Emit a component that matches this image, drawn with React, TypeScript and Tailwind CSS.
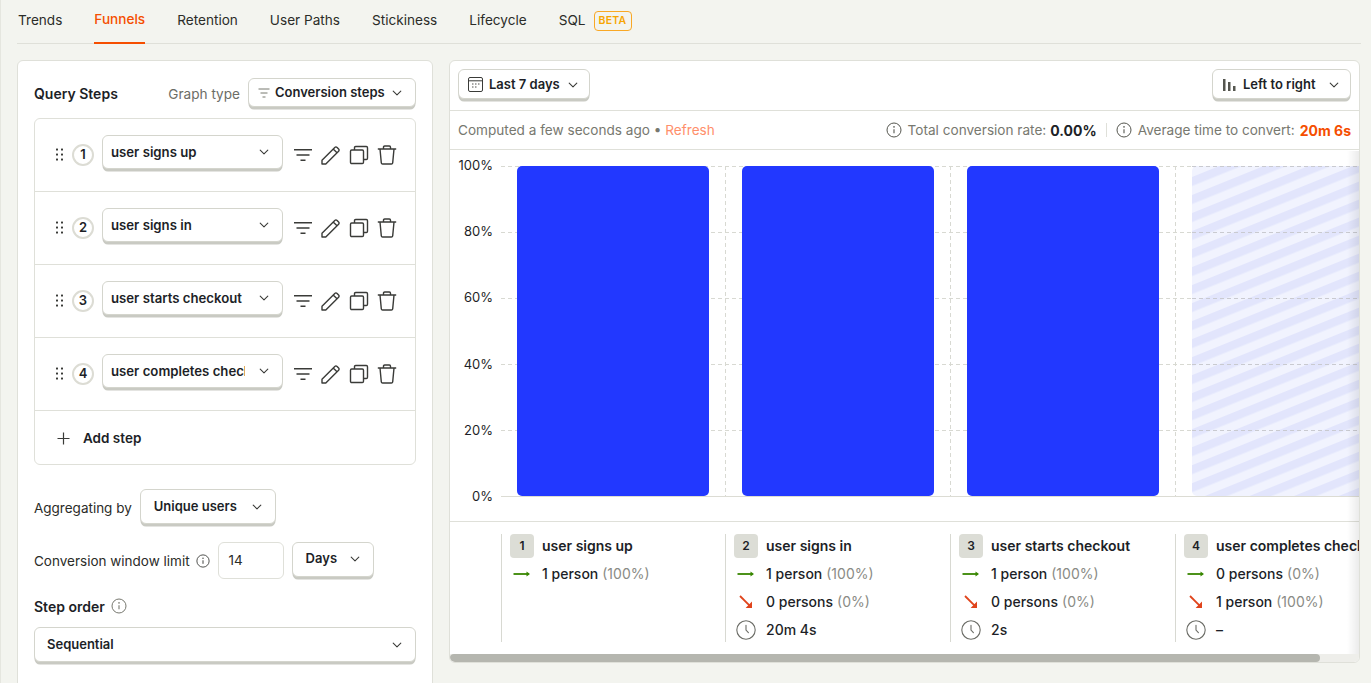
import React from "react";

const Chevron = ({ cls = "" }: { cls?: string }) => (
  <svg width="12" height="12" viewBox="0 0 12 12" fill="none" className={cls}>
    <path d="M2.2 4.2 6 7.8l3.8-3.6" stroke="#3a3b38" strokeWidth="1.1" strokeLinecap="round" strokeLinejoin="round" />
  </svg>
);

const Info = ({ size = 16, color = "#55564f" }: { size?: number; color?: string }) => (
  <svg width={size} height={size} viewBox="0 0 16 16" fill="none" className="shrink-0">
    <circle cx="8" cy="8" r="7" stroke={color} strokeWidth="1" />
    <path d="M8 7.2v4" stroke={color} strokeWidth="1.1" />
    <circle cx="8" cy="4.9" r=".8" fill={color} />
  </svg>
);

const Clock = () => (
  <svg width="20" height="20" viewBox="0 0 20 20" fill="none">
    <circle cx="10" cy="10" r="9.2" stroke="#6b6c66" strokeWidth="1.1" />
    <path d="M10 5.2V10l2.4 2.6" stroke="#6b6c66" strokeWidth="1.1" strokeLinecap="round" />
  </svg>
);

const ArrowRight = () => (
  <svg width="18" height="10" viewBox="0 0 18 10" fill="none">
    <path d="M.5 5h15" stroke="#388600" strokeWidth="1.8" />
    <path d="M13.5 2.4 17 5l-3.500 2.600z" fill="#388600" />
  </svg>
);

const ArrowDown = () => (
  <svg width="14" height="14" viewBox="0 0 14 14" fill="none">
    <path d="M1 1l10.4 10.4" stroke="#e0441c" strokeWidth="1.8" />
    <path d="M13 6.6V13H6.6z" fill="#e0441c" />
  </svg>
);

const Btn = ({ children, cls }: { children: React.ReactNode; cls: string }) => (
  <div
    className={`flex items-center bg-white border border-[#d4d5cd] rounded-md shadow-[0_3px_0_-0.5px_#c9cac3] font-semibold text-[13px] text-[#1d1f27] ${cls}`}
  >
    {children}
  </div>
);

const FilterIcon = () => (
  <svg width="20" height="14" viewBox="0 0 20 14" fill="none">
    <path d="M1 1.8h18M3.5 7h13M7.5 12.2h5" stroke="#3a3b38" strokeWidth="1.6" />
  </svg>
);
const PencilIcon = () => (
  <svg width="22" height="22" viewBox="0 0 22 22" fill="none">
    <path
      d="M2 16.2 14.8 3.4a1.6 1.6 0 0 1 2.3 0l1.5 1.5a1.6 1.6 0 0 1 0 2.3L5.8 20H2zM13.2 5l3.8 3.8"
      stroke="#3a3b38"
      strokeWidth="1.4"
      strokeLinejoin="round"
    />
  </svg>
);
const CopyIcon = () => (
  <svg width="20" height="20" viewBox="0 0 20 20" fill="none">
    <rect x="1.5" y="5" width="13" height="13.5" rx="1.2" stroke="#3a3b38" strokeWidth="1.4" />
    <path d="M5.5 5V2.7c0-.7.5-1.200 1.200-1.200h10.600c.7 0 1.200.5 1.200 1.200v10.600c0 .7-.5 1.200-1.200 1.200H14.500" stroke="#3a3b38" strokeWidth="1.4" />
  </svg>
);
const TrashIcon = () => (
  <svg width="20" height="20" viewBox="0 0 20 20" fill="none">
    <path d="M.8 4h18.400M6.500 4V2.200C6.500 1.500 7 1 7.700 1h4.600c.7 0 1.200.5 1.200 1.200V4M3 4l1.300 13.800c.1.700.6 1.200 1.300 1.200h8.800c.7 0 1.200-.5 1.300-1.200L17 4" stroke="#3a3b38" strokeWidth="1.4" />
  </svg>
);
const Grip = () => (
  <svg width="7" height="13" viewBox="0 0 7 13" fill="#3a3b38">
    <rect x="0" y="0.500" width="2" height="2" rx=".5" />
    <rect x="5" y="0.500" width="2" height="2" rx=".5" />
    <rect x="0" y="5.500" width="2" height="2" rx=".5" />
    <rect x="5" y="5.500" width="2" height="2" rx=".5" />
    <rect x="0" y="10.500" width="2" height="2" rx=".5" />
    <rect x="5" y="10.500" width="2" height="2" rx=".5" />
  </svg>
);

const Step = ({ n, label }: { n: number; label: string }) => (
  <div className="h-[73px] flex items-center border-b border-[#dfe0d9] pl-[21px] pb-px">
    <Grip />
    <div className="ml-[9px] w-[22px] h-[22px] rounded-full border-2 border-[#dcdcd4] flex items-center justify-center text-[13px] font-semibold text-[#1d1f27]">
      {n}
    </div>
    <Btn cls="ml-[8px] w-[181px] h-[34px] -mt-[5px] pl-2 pr-[12px] justify-between">
      <span className="overflow-hidden whitespace-nowrap w-[134px] pt-px text-[13.2px]">{label}</span>
      <Chevron />
    </Btn>
    <div className="ml-[10px] flex items-center">
      <FilterIcon />
      <span className="ml-[7px]"><PencilIcon /></span>
      <span className="ml-[7px]"><CopyIcon /></span>
      <span className="ml-[8px]"><TrashIcon /></span>
    </div>
  </div>
);

const plotLines = [16.5, 82.5, 148.5, 214.5, 280.5];

const Chart = () => (
  <div className="flex h-[372px] border-b border-[#dfe0d9] shrink-0">
    <div className="w-[43px] h-[347px] mt-[7px] flex flex-col justify-between items-end shrink-0 text-[13px] leading-4 text-[#1d1f27]">
      <span>100%</span>
      <span>80%</span>
      <span>60%</span>
      <span>40%</span>
      <span>20%</span>
      <span>0%</span>
    </div>
    <svg width="858" height="371" className="shrink-0 ml-[8px]">
      <defs>
        <pattern id="hatch" width="40" height="16.700" patternUnits="userSpaceOnUse" patternTransform="rotate(-22)">
          <rect width="40" height="16.700" fill="#f1f3fe" />
          <rect width="40" height="8.350" fill="#e2e5fc" />
        </pattern>
      </defs>
      {plotLines.map((y) => (
        <line key={y} x1="0" x2="858" y1={y} y2={y} stroke="#d8d9d2" strokeDasharray="4 3" />
      ))}
      <line x1="0" x2="858" y1="346.500" y2="346.500" stroke="#dcdcd4" />
      {[224.5, 449.5, 674.5].map((x) => (
        <line key={x} x1={x} x2={x} y1="16" y2="346" stroke="#d8d9d2" strokeDasharray="4 3" />
      ))}
      {[16, 241, 466].map((x) => (
        <rect key={x} x={x} y="16" width="192" height="330" rx="5" fill="#2238ff" />
      ))}
      <rect x="691" y="16" width="192" height="330" rx="5" fill="url(#hatch)" />
      {plotLines.map((y) => (
        <line key={y} x1="691" x2="858" y1={y} y2={y} stroke="#c9cad0" strokeDasharray="4 3" />
      ))}
    </svg>
  </div>
);

type Row = { icon: "right" | "down" | "clock"; main: string; sub?: string };

const LegendCol = ({ n, title, rows, cls }: { n: number; title: string; rows: Row[]; cls: string }) => (
  <div className={`h-[108px] shrink-0 border-l border-[#d8d9d2] pl-2 whitespace-nowrap ${cls}`}>
    <div className="flex items-center h-6 mb-[2px]">
      <div className="w-6 h-6 rounded bg-[#dcddd6] flex items-center justify-center text-[12px] font-semibold text-[#1d1f27]">
        {n}
      </div>
      <span className="ml-2 pb-[2px] text-[14px] font-semibold text-[#1d1f27]">{title}</span>
    </div>
    {rows.map((r, i) => (
      <div key={i} className="flex items-center h-[28px] text-[14px] text-[#1d1f27] font-medium">
        <div className="w-6 flex items-center justify-center shrink-0">
          {r.icon === "right" ? <ArrowRight /> : r.icon === "down" ? <ArrowDown /> : <Clock />}
        </div>
        <span className="ml-2 pb-[2px]">{r.main}</span>
        {r.sub && <span className="ml-1 pb-[2px] font-normal text-[#8a8b85]">{r.sub}</span>}
      </div>
    ))}
  </div>
);

export default function App() {
  const tabs = ["Trends", "Funnels", "Retention", "User Paths", "Stickiness", "Lifecycle", "SQL"];
  return (
    <div
      className="w-[1371px] h-[683px] overflow-hidden bg-[#f3f4ef] border-l border-[#e5e6df] text-[#1d1f27]"
      style={{ fontFamily: "Inter, 'Liberation Sans', sans-serif" }}
    >
      <div className="ml-[16px] mr-[10px] h-[44px] border-b border-[#dfe0d9] flex items-stretch gap-8 text-[13.6px] pl-px">
        {tabs.map((t) => (
          <div
            key={t}
            className={
              t === "Funnels"
                ? "flex items-center pb-[4px] border-b-2 border-[#f54e00] -mb-px text-[#f54e00] font-medium"
                : "flex items-center pb-[3px] text-[#2b2c28]"
            }
          >
            {t}
          </div>
        ))}
        <div className="flex items-center pb-[1px] -ml-6">
          <span className="px-[4px] h-[20px] w-[38px] flex items-center justify-center rounded border border-[#f9a825] text-[#f7a501] text-[10.5px] font-semibold tracking-wide">
            BETA
          </span>
        </div>
      </div>

      <div className="flex items-start ml-[16px] mt-4 gap-4">
        <div className="w-[416px] h-[640px] shrink-0 bg-white border border-[#dfe0d9] rounded-md px-4 pt-4">
          <div className="flex items-center h-[33px]">
            <span className="text-[14px] font-semibold flex-1">Query Steps</span>
            <span className="text-[13.6px] text-[#6c6d66] mr-2 pt-[2px]">Graph type</span>
            <Btn cls="w-[168px] h-[29px] pl-[9px] pr-[12px] justify-between -mt-[2px]">
              <span className="flex items-center">
                <svg width="12" height="10" viewBox="0 0 12 10" fill="none" className="mr-[5px]">
                  <path d="M.5 1h11M2.500 5h7M4.500 9h3" stroke="#77786f" strokeWidth="1" />
                </svg>
                Conversion steps
              </span>
              <Chevron />
            </Btn>
          </div>

          <div className="mt-[8px] h-[347px] border border-[#dfe0d9] rounded-md">
            <Step n={1} label="user signs up" />
            <Step n={2} label="user signs in" />
            <Step n={3} label="user starts checkout" />
            <Step n={4} label="user completes checkout" />
            <div className="flex items-center h-[54px] pl-[22px] text-[13.5px] font-semibold">
              <svg width="13" height="13" viewBox="0 0 13 13" fill="none">
                <path d="M6.500.5v12M.5 6.500h12" stroke="#3a3b38" strokeWidth="1.200" />
              </svg>
              <span className="ml-[13px]">Add step</span>
            </div>
          </div>

          <div className="mt-[24px] flex items-center text-[13.5px] text-[#2b2c28]">
            <span className="pt-[3px]">Aggregating by</span>
            <Btn cls="ml-2 w-[136px] h-[35px] pl-[13px] pr-[12px] justify-between">
              Unique users
              <Chevron />
            </Btn>
          </div>

          <div className="mt-[18px] flex items-center text-[13.5px] text-[#2b2c28]">
            <span className="pt-px">Conversion window limit</span>
            <span className="ml-[6px]"><Info size={14} color="#3a3b38" /></span>
            <div className="ml-[8px] w-[66px] h-[37px] border border-[#dfe0d9] rounded-md pl-[10px] flex items-center">14</div>
            <Btn cls="ml-2 w-[82px] h-[35px] pl-[13px] pr-[12px] pb-px justify-between -mt-[2px] text-[13px]">
              Days
              <Chevron />
            </Btn>
          </div>

          <div className="mt-[17px] flex items-center text-[14px] font-semibold h-[20px]">
            Step order
            <span className="ml-[6px]"><Info size={16} color="#77786f" /></span>
          </div>

          <Btn cls="mt-[11px] w-[382px] h-[35px] pl-[12px] pr-[12px] justify-between">
            Sequential
            <Chevron />
          </Btn>
        </div>

        <div className="relative w-[911px] h-[603px] shrink-0 bg-white border border-[#dfe0d9] rounded-md overflow-hidden flex flex-col">
          <div className="h-[50px] shrink-0 flex items-center justify-between px-2 pb-[2px] border-b border-[#dfe0d9]">
            <Btn cls="w-[132px] h-[30px] pl-[9px] pr-[10px] pt-[2px] justify-between -mt-[2px]">
              <span className="flex items-center">
                <svg width="15" height="15" viewBox="0 0 15 15" fill="none" className="mr-[6px]">
                  <rect x=".5" y=".5" width="14" height="14" rx="1.500" stroke="#3a3b38" />
                  <path d="M.5 3.800h14" stroke="#3a3b38" />
                  <path d="M4 7h1.500M7 7h1.500M10 7h1.500M4 10h1.500M7 10h1.500" stroke="#3a3b38" strokeWidth=".9" />
                </svg>
                Last 7 days
              </span>
              <Chevron />
            </Btn>
            <Btn cls="w-[139px] h-[30px] pl-[10px] pr-[10px] pt-[2px] justify-between -mt-[2px] text-[13.6px]">
              <span className="flex items-center">
                <svg width="13" height="12" viewBox="0 0 13 12" fill="#55564f" className="mr-[7px]">
                  <rect x="0" y="0" width="2.500" height="12" />
                  <rect x="5" y="3" width="2.500" height="9" />
                  <rect x="10" y="7" width="2.500" height="5" />
                </svg>
                Left to right
              </span>
              <Chevron />
            </Btn>
          </div>

          <div className="h-[39px] shrink-0 flex items-center justify-between pl-2 pr-2 border-b border-[#dfe0d9] text-[13.6px] text-[#77786f]">
            <div>
              Computed a few seconds ago <span>•</span>{" "}
              <span className="text-[#ff8f6b]">Refresh</span>
            </div>
            <div className="flex items-center">
              <Info />
              <span className="ml-[6px]">Total conversion rate:</span>
              <span className="ml-1 text-[14px] font-bold text-[#1d1f27]">0.00%</span>
              <span className="mx-[9px] w-px h-[14px] bg-[#dfe0d9]" />
              <Info />
              <span className="ml-[6px]">Average time to convert:</span>
              <span className="ml-[5px] text-[14px] font-bold text-[#f54e00]">20m 6s</span>
            </div>
          </div>

          <Chart />

          <div className="flex-1 flex pl-[51px] pt-3 overflow-hidden">
            <LegendCol
              n={1}
              cls="w-[224px]"
              title="user signs up"
              rows={[{ icon: "right", main: "1 person", sub: "(100%)" }]}
            />
            <LegendCol
              n={2}
              cls="w-[225px]"
              title="user signs in"
              rows={[
                { icon: "right", main: "1 person", sub: "(100%)" },
                { icon: "down", main: "0 persons", sub: "(0%)" },
                { icon: "clock", main: "20m 4s" },
              ]}
            />
            <LegendCol
              n={3}
              cls="w-[225px]"
              title="user starts checkout"
              rows={[
                { icon: "right", main: "1 person", sub: "(100%)" },
                { icon: "down", main: "0 persons", sub: "(0%)" },
                { icon: "clock", main: "2s" },
              ]}
            />
            <LegendCol
              n={4}
              cls="w-[225px]"
              title="user completes checkout"
              rows={[
                { icon: "right", main: "0 persons", sub: "(0%)" },
                { icon: "down", main: "1 person", sub: "(100%)" },
                { icon: "clock", main: "–" },
              ]}
            />
          </div>

          <div className="h-2 shrink-0 bg-[#eeeeea]">
            <div className="h-2 w-[870px] rounded-full bg-[#b5b6af]" />
          </div>

          <div className="absolute right-0 top-[90px] bottom-2 w-3 bg-gradient-to-l from-[#00000014] to-transparent pointer-events-none" />
        </div>
      </div>
    </div>
  );
}
